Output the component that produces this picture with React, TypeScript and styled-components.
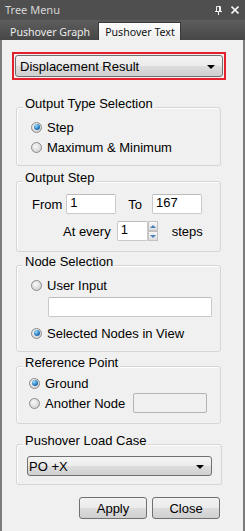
import styled, { createGlobalStyle } from "styled-components";

const GlobalStyle = createGlobalStyle`
  html, body {
    margin: 0;
    padding: 0;
    background: #f0f0f0;
  }
  body {
    font-family: "Liberation Sans", Arial, sans-serif;
    font-size: 13px;
    color: #000;
  }
`;

const Panel = styled.div`
  width: 245px;
  height: 531px;
  display: flex;
  flex-direction: column;
  overflow: hidden;
`;

const TitleBar = styled.div`
  height: 20px;
  background: #4f4f4f;
  display: flex;
  align-items: center;
  padding: 0 6px 0 5px;
  font-family: "Noto Sans", sans-serif;
  font-size: 11px;
  color: #d6d6d6;
`;

const TitleText = styled.span`
  flex: 1;
  line-height: 20px;
`;

const TitleIcons = styled.div`
  display: flex;
  align-items: center;
  gap: 9px;
  color: #f2f2f2;
`;

const TabStrip = styled.div`
  height: 20px;
  background: linear-gradient(#5d5d5d, #474747);
  display: flex;
  align-items: flex-end;
  padding-left: 2px;
  font-family: "Noto Sans", sans-serif;
  font-size: 10.6px;
`;

const Tab = styled.div<{ $active?: boolean }>`
  height: 18px;
  padding: ${(p) => (p.$active ? "0 5px 0 6px" : "0 7px 0 7px")};
  display: flex;
  align-items: center;
  box-sizing: border-box;
  color: ${(p) => (p.$active ? "#111" : "#ececec")};
  background: ${(p) =>
    p.$active ? "linear-gradient(#fdfdfd, #eeeeee)" : "transparent"};
  border: 1px solid ${(p) => (p.$active ? "#3a3a3a" : "transparent")};
  border-bottom: none;
`;

const Content = styled.div`
  flex: 1;
  background: #f0f0f0;
  border-left: 2px solid #7b7b7b;
  border-right: 2px solid #7b7b7b;
  display: flex;
  flex-direction: column;
  align-items: flex-start;
`;

const Highlight = styled.div`
  margin: 12px 0 0 10px;
  width: 214px;
  box-sizing: border-box;
  border: 2px solid #e3202b;
  padding: 1px;
`;

const Combo = styled.div<{ $w?: number; $h?: number; $pad?: number }>`
  width: ${(p) => (p.$w ? `${p.$w}px` : "100%")};
  height: ${(p) => p.$h ?? 22}px;
  box-sizing: border-box;
  border: 1px solid #707070;
  border-radius: 3px;
  background: linear-gradient(#f4f4f4 0%, #ebebeb 50%, #dddddd 51%, #d0d0d0 100%);
  display: flex;
  align-items: center;
  padding: 0 7px 0 ${(p) => p.$pad ?? 4}px;
  font-size: 13px;
`;

const ComboText = styled.span`
  flex: 1;
`;

const Arrow = styled.span`
  width: 0;
  height: 0;
  border-left: 4px solid transparent;
  border-right: 4px solid transparent;
  border-top: 4px solid #000;
  margin-top: 2px;
`;

const Group = styled.div<{ $top: number; $w?: number; $bottom: number }>`
  margin: ${(p) => p.$top}px 0 0 14px;
  width: ${(p) => p.$w ?? 205}px;
  box-sizing: border-box;
  border: 1px solid #d5d5d5;
  border-radius: 3px;
  padding-bottom: ${(p) => p.$bottom}px;
  box-shadow: inset 1px 1px 0 #fff;
`;

const Legend = styled.div`
  display: table;
  margin: -11px 0 0 6px;
  padding: 0 2px;
  line-height: 14px;
  background: #f0f0f0;
`;

const Row = styled.div<{ $top: number; $left: number; $gap?: number }>`
  display: flex;
  align-items: center;
  height: 20px;
  margin-top: ${(p) => p.$top}px;
  padding-left: ${(p) => p.$left}px;
  gap: ${(p) => p.$gap ?? 5}px;
`;

const Radio = styled.span<{ $on?: boolean }>`
  width: 11px;
  height: 11px;
  box-sizing: border-box;
  border-radius: 50%;
  border: 1px solid #8a8a8a;
  background: radial-gradient(circle at 40% 35%, #f8f8f8, #c8c8c8);
  display: flex;
  align-items: center;
  justify-content: center;
  flex-shrink: 0;
  &::after {
    content: "";
    display: ${(p) => (p.$on ? "block" : "none")};
    width: 6px;
    height: 6px;
    border-radius: 50%;
    background: radial-gradient(circle at 35% 30%, #9fdcff, #2a7fc4 55%, #124a85);
  }
`;

const Field = styled.div<{ $w: number; $ml?: number; $mt?: number; $disabled?: boolean }>`
  width: ${(p) => p.$w}px;
  height: 20px;
  box-sizing: border-box;
  margin-left: ${(p) => p.$ml ?? 0}px;
  margin-top: ${(p) => p.$mt ?? 0}px;
  border: 1px solid ${(p) => (p.$disabled ? "#b4b4b4" : "#c9c9c9")};
  border-top-color: ${(p) => (p.$disabled ? "#b4b4b4" : "#bcbcbc")};
  border-radius: 2px;
  background: ${(p) => (p.$disabled ? "#f0f0f0" : "#fff")};
  padding: 0 3px;
  line-height: 16px;
  flex-shrink: 0;
`;

const Label = styled.span<{ $ml?: number }>`
  margin-left: ${(p) => p.$ml ?? 0}px;
  white-space: nowrap;
`;

const Spin = styled.div`
  display: flex;
  flex-direction: column;
  width: 10px;
  height: 20px;
  flex-shrink: 0;
`;

const SpinBtn = styled.div<{ $down?: boolean }>`
  flex: 1;
  box-sizing: border-box;
  border: 1px solid #c2c2c2;
  background: linear-gradient(#f8f8f8, #dedede);
  display: flex;
  align-items: center;
  justify-content: center;
  &::after {
    content: "";
    width: 0;
    height: 0;
    border-left: 3px solid transparent;
    border-right: 3px solid transparent;
    ${(p) =>
      p.$down ? "border-top: 3px solid #4a7fbf;" : "border-bottom: 3px solid #4a7fbf;"}
  }
`;

const ComboSlot = styled.div`
  margin: 8px 0 0 10px;
`;

const ButtonRow = styled.div`
  display: flex;
  gap: 5px;
  margin: 12px 0 0 77px;
`;

const Button = styled.div`
  width: 68px;
  height: 22px;
  box-sizing: border-box;
  border: 1px solid #707070;
  border-radius: 3px;
  background: linear-gradient(#f2f2f2 0%, #ebebeb 50%, #dddddd 51%, #cfcfcf 100%);
  display: flex;
  align-items: center;
  justify-content: center;
  font-size: 13px;
`;

const PinIcon = () => (
  <svg width="7" height="9" viewBox="0 0 7 9" fill="none">
    <path d="M1.5 0.5h4v5h-4z M0 5.5h7 M3.5 5.5v3.5 M4.5 0.5v5" stroke="currentColor" strokeWidth="1" />
  </svg>
);

const CloseIcon = () => (
  <svg width="8" height="8" viewBox="0 0 8 8">
    <path d="M0.5 0.5l7 7M7.5 0.5l-7 7" stroke="currentColor" strokeWidth="1.6" />
  </svg>
);

const App = () => {
  return (
    <>
      <GlobalStyle />
      <Panel>
        <TitleBar>
          <TitleText>Tree Menu</TitleText>
          <TitleIcons>
            <PinIcon />
            <CloseIcon />
          </TitleIcons>
        </TitleBar>
        <TabStrip>
          <Tab>Pushover Graph</Tab>
          <Tab $active>Pushover Text</Tab>
        </TabStrip>
        <Content>
          <Highlight>
            <Combo>
              <ComboText>Displacement Result</ComboText>
              <Arrow />
            </Combo>
          </Highlight>

          <Group $top={27} $bottom={8}>
            <Legend>Output Type Selection</Legend>
            <Row $top={6} $left={14}>
              <Radio $on />
              <Label>Step</Label>
            </Row>
            <Row $top={0} $left={14}>
              <Radio />
              <Label>Maximum &amp; Minimum</Label>
            </Row>
          </Group>

          <Group $top={15} $bottom={10}>
            <Legend>Output Step</Legend>
            <Row $top={9} $left={15} $gap={0}>
              <Label>From</Label>
              <Field $w={50} $ml={4}>1</Field>
              <Label $ml={12}>To</Label>
              <Field $w={50} $ml={10}>167</Field>
            </Row>
            <Row $top={7} $left={46} $gap={0}>
              <Label>At every</Label>
              <Field $w={31} $ml={6}>1</Field>
              <Spin>
                <SpinBtn />
                <SpinBtn $down />
              </Spin>
              <Label $ml={14}>steps</Label>
            </Row>
          </Group>

          <Group $top={13} $bottom={8}>
            <Legend>Node Selection</Legend>
            <Row $top={6} $left={14}>
              <Radio />
              <Label>User Input</Label>
            </Row>
            <Field $w={164} $ml={31} $mt={2} />
            <Row $top={6} $left={14}>
              <Radio $on />
              <Label>Selected Nodes in View</Label>
            </Row>
          </Group>

          <Group $top={14} $bottom={10}>
            <Legend>Reference Point</Legend>
            <Row $top={3} $left={12}>
              <Radio $on />
              <Label>Ground</Label>
            </Row>
            <Row $top={0} $left={12} $gap={0}>
              <Radio />
              <Label $ml={5}>Another Node</Label>
              <Field $w={74} $ml={8} $disabled />
            </Row>
          </Group>

          <Group $top={20} $w={206} $bottom={8}>
            <Legend>Pushover Load Case</Legend>
            <ComboSlot>
              <Combo $w={185} $h={20} $pad={1}>
                <ComboText>PO +X</ComboText>
                <Arrow />
              </Combo>
            </ComboSlot>
          </Group>

          <ButtonRow>
            <Button>Apply</Button>
            <Button>Close</Button>
          </ButtonRow>
        </Content>
      </Panel>
    </>
  );
};

export default App;
